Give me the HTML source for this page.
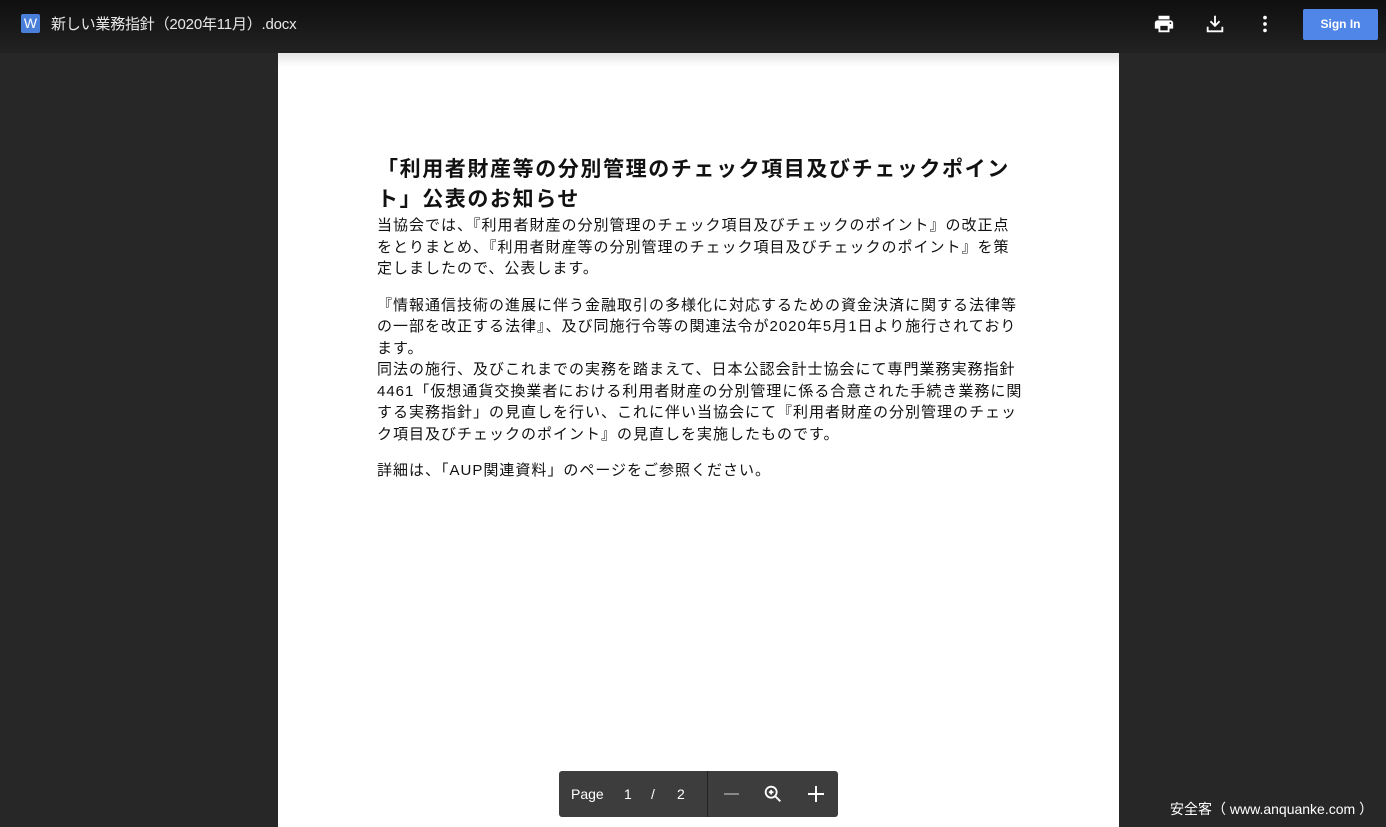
<!DOCTYPE html>
<html><head><meta charset="utf-8"><style>
html,body{margin:0;padding:0;width:1386px;height:827px;overflow:hidden;background:#272727;font-family:"Liberation Sans","Noto Sans CJK JP",sans-serif}
.top{position:absolute;left:0;top:0;width:1386px;height:53px;background:linear-gradient(#0f0f0f,#222)}
.wicon{position:absolute;left:21px;top:14px;width:19px;height:19px;background:#4a7fd9;border-radius:2px;color:#fff;font-size:14px;text-align:center;line-height:19px}
.title{position:absolute;left:51px;top:15px;color:#e8e8e8;font-size:15px;line-height:20px;letter-spacing:-0.2px}
.signin{position:absolute;left:1303px;top:9px;width:75px;height:31px;background:#4f86e8;border-radius:2px;color:#fff;font-weight:bold;font-size:12px;text-align:center;line-height:31px}
.page{position:absolute;left:278px;top:53px;width:841px;height:774px;background:linear-gradient(#e6e6e6,#fff 14px)}
.content{position:absolute;left:377px;top:155px;color:#111;white-space:nowrap}
h1{margin:0;font-size:21px;line-height:30px;font-weight:bold;letter-spacing:1.6px}
p{margin:0;font-size:15px;line-height:21.5px;letter-spacing:1px}
.bar{position:absolute;left:559px;top:771px;width:279px;height:46px;background:#3d3d3d;border-radius:3px;color:#fff;font-size:14px}
.wm{position:absolute;left:1170px;top:799px;color:#fff;font-size:14px}
</style></head><body>
<div class="top">
<div class="wicon">W</div>
<div class="title">新しい業務指針（2020年11月）.docx</div>
<svg style="position:absolute;left:1153px;top:13px" width="22" height="22" viewBox="0 0 24 24"><path fill="#fff" d="M19 8H5c-1.66 0-3 1.340-3 3v6h4v4h12v-4h4v-6c0-1.66-1.34-3-3-3zm-3 11H8v-5h8v5zm3-7c-.55 0-1-.45-1-1s.45-1 1-1 1 .45 1 1-.45 1-1 1zm-1-9H6v4h12V3z"/></svg>
<svg style="position:absolute;left:1204px;top:13px" width="22" height="22" viewBox="0 0 24 24"><path fill="none" stroke="#fff" stroke-width="2" d="M12 3v11M7 9l5 5 5-5M4 15v5h16v-5"/></svg>
<svg style="position:absolute;left:1254px;top:13px" width="22" height="22" viewBox="0 0 24 24"><circle cx="12" cy="5" r="2" fill="#fff"/><circle cx="12" cy="12" r="2" fill="#fff"/><circle cx="12" cy="19" r="2" fill="#fff"/></svg>
<div class="signin">Sign In</div>
</div>
<div class="page"></div>
<div class="content">
<h1>「利用者財産等の分別管理のチェック項目及びチェックポイン<br>ト」公表のお知らせ</h1>
<p>当協会では、『利用者財産の分別管理のチェック項目及びチェックのポイント』の改正点<br>をとりまとめ、『利用者財産等の分別管理のチェック項目及びチェックのポイント』を策<br>定しましたので、公表します。</p>
<p style="margin-top:15px">『情報通信技術の進展に伴う金融取引の多様化に対応するための資金決済に関する法律等<br>の一部を改正する法律』、及び同施行令等の関連法令が2020年5月1日より施行されており<br>ます。<br>同法の施行、及びこれまでの実務を踏まえて、日本公認会計士協会にて専門業務実務指針<br>4461「仮想通貨交換業者における利用者財産の分別管理に係る合意された手続き業務に関<br>する実務指針」の見直しを行い、これに伴い当協会にて『利用者財産の分別管理のチェッ<br>ク項目及びチェックのポイント』の見直しを実施したものです。</p>
<p style="margin-top:15px">詳細は、「AUP関連資料」のページをご参照ください。</p>
</div>
<div class="bar">
<span style="position:absolute;left:12px;top:15px">Page</span>
<span style="position:absolute;left:65px;top:15px">1</span>
<span style="position:absolute;left:92px;top:15px">/</span>
<span style="position:absolute;left:118px;top:15px">2</span>
<div style="position:absolute;left:148px;top:0;width:1px;height:46px;background:#222"></div>
<div style="position:absolute;left:165px;top:22px;width:15px;height:2px;background:#888"></div>
<svg style="position:absolute;left:203px;top:12px" width="22" height="22" viewBox="0 0 24 24"><circle cx="10" cy="10" r="6" fill="none" stroke="#fff" stroke-width="2"/><path d="M14.5 14.5L20 20M10 7.5v5M7.5 10h5" stroke="#fff" stroke-width="2"/></svg>
<div style="position:absolute;left:249px;top:22px;width:16px;height:2px;background:#fff"></div>
<div style="position:absolute;left:256px;top:15px;width:2px;height:16px;background:#fff"></div>
</div>
<div class="wm">安全客（ www.anquanke.com ）</div>
</body></html>
